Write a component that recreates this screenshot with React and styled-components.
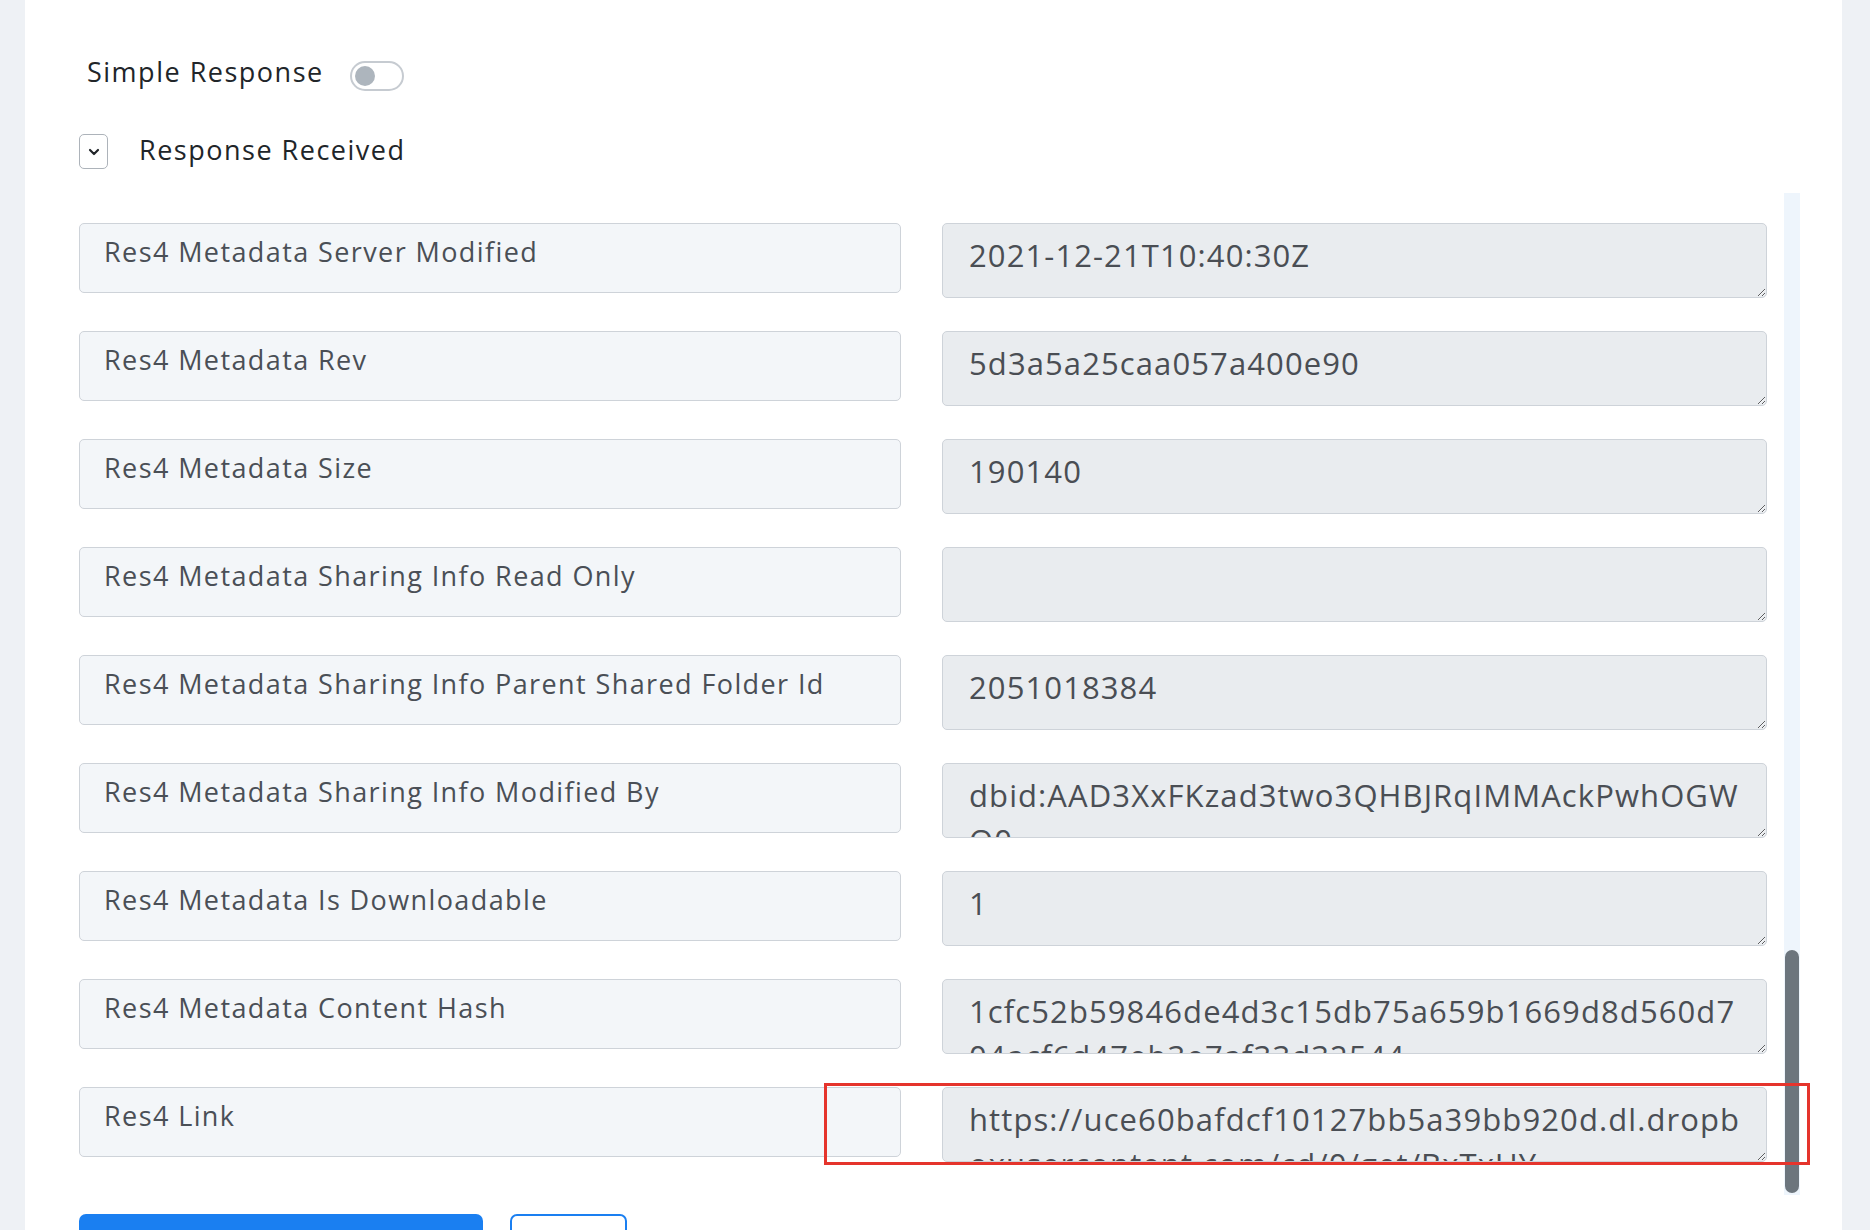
import React from 'react';
import styled, { createGlobalStyle } from 'styled-components';
import { ChevronDown } from 'lucide-react';

const fields = [
    { label: 'Res4 Metadata Server Modified', value: '2021-12-21T10:40:30Z' },
    { label: 'Res4 Metadata Rev', value: '5d3a5a25caa057a400e90' },
    { label: 'Res4 Metadata Size', value: '190140' },
    { label: 'Res4 Metadata Sharing Info Read Only', value: '' },
    { label: 'Res4 Metadata Sharing Info Parent Shared Folder Id', value: '2051018384' },
    { label: 'Res4 Metadata Sharing Info Modified By', value: 'dbid:AAD3XxFKzad3two3QHBJRqIMMAckPwhOGWQ0' },
    { label: 'Res4 Metadata Is Downloadable', value: '1' },
    { label: 'Res4 Metadata Content Hash', value: '1cfc52b59846de4d3c15db75a659b1669d8d560d704acf6d47eb3e7af33d32544' },
    {
        label: 'Res4 Link',
        value: 'https://uce60bafdcf10127bb5a39bb920d.dl.dropboxusercontent.com/cd/0/get/BxTxUY-1x4Z_DA20kq/file',
        marked: true,
    },
];

const App = () => {
    return (
        <>
            <GlobalStyle />
            <Page>
                <Card>
                    <ToggleRow>
                        <Heading $lift={10}>Simple Response</Heading>
                        <Switch>
                            <Knob />
                        </Switch>
                    </ToggleRow>
                    <CollapseRow>
                        <CollapseButton>
                            <ChevronDown size={16} strokeWidth={3.2} />
                        </CollapseButton>
                        <Heading $lift={4}>Response Received</Heading>
                    </CollapseRow>
                    <ScrollArea>
                        <List>
                            {fields.map((f) => (
                                <Row key={f.label}>
                                    <FieldLabel>{f.label}</FieldLabel>
                                    <FieldValue readOnly rows={1} value={f.value} />
                                    {f.marked && <Marker />}
                                </Row>
                            ))}
                        </List>
                        <Track>
                            <Thumb />
                        </Track>
                    </ScrollArea>
                    <Actions>
                        <PrimaryButton />
                        <OutlineButton />
                    </Actions>
                </Card>
            </Page>
        </>
    );
};

const GlobalStyle = createGlobalStyle`
    html, body {
        margin: 0;
        height: 1230px;
        overflow: hidden;
        background: #eef1f5;
    }
    * {
        box-sizing: border-box;
    }
`;
const Page = styled.div`
    display: flex;
    height: 1230px;
    padding: 0 28px 0 25px;
    font-family: "Open Sans", "Noto Sans", sans-serif;
`;
const Card = styled.div`
    flex: 1;
    background: #fff;
    padding: 61px 42px 0 54px;
    display: flex;
    flex-direction: column;
`;
const ToggleRow = styled.div`
    display: flex;
    align-items: center;
    gap: 26px;
    padding-left: 8px;
    height: 30px;
`;
const Heading = styled.span`
    font-size: 27px;
    color: #212529;
    letter-spacing: 1.5px;
    margin-bottom: ${(p) => p.$lift || 0}px;
`;
const Switch = styled.div`
    width: 54px;
    height: 30px;
    border: 2px solid #c6cbd1;
    border-radius: 15px;
    display: flex;
    align-items: center;
    padding-left: 3px;
`;
const Knob = styled.div`
    width: 20px;
    height: 20px;
    border-radius: 50%;
    background: #adb5bd;
`;
const CollapseRow = styled.div`
    display: flex;
    align-items: center;
    gap: 31px;
    margin-top: 43px;
    height: 35px;
`;
const CollapseButton = styled.div`
    width: 29px;
    height: 35px;
    border: 1.5px solid #adb3ba;
    border-radius: 5px;
    display: flex;
    align-items: center;
    justify-content: center;
    color: #212529;
`;
const ScrollArea = styled.div`
    margin-top: 24px;
    height: 1002px;
    display: grid;
    grid-template-columns: 1fr 16px;
    gap: 17px;
`;
const List = styled.div`
    padding-top: 30px;
`;
const Row = styled.div`
    position: relative;
    display: grid;
    grid-template-columns: 822px 825px;
    gap: 41px;
    align-items: start;
    margin-bottom: 33px;
`;
const FieldLabel = styled.div`
    height: 70px;
    padding: 8px 24px 0;
    border: 1.5px solid #ced3d9;
    border-radius: 5px;
    background: #f3f6f9;
    color: #4a4f56;
    font-size: 27px;
    letter-spacing: 1.4px;
    line-height: 1.5;
    white-space: nowrap;
    overflow: hidden;
`;
const FieldValue = styled.textarea`
    display: block;
    width: 825px;
    height: 75px;
    padding: 9px 24px 0 26px;
    border: 1.5px solid #ced3d9;
    border-radius: 5px;
    background: #e9ecef;
    color: #4a4e54;
    font-family: "Open Sans", "Noto Sans", sans-serif;
    font-size: 31px;
    letter-spacing: 1.1px;
    line-height: 45px;
    overflow: hidden;
    resize: vertical;
    outline: none;
`;
const Marker = styled.div`
    position: absolute;
    left: 745px;
    top: -4px;
    width: 986px;
    height: 82px;
    border: 3px solid #e5342c;
    pointer-events: none;
`;
const Track = styled.div`
    background: #eef5fc;
    display: flex;
    flex-direction: column;
    justify-content: flex-end;
    align-items: center;
    padding-bottom: 2px;
`;
const Thumb = styled.div`
    width: 14px;
    height: 243px;
    border-radius: 7px;
    background: #6c757d;
`;
const Actions = styled.div`
    display: flex;
    gap: 27px;
    margin-top: 19px;
`;
const PrimaryButton = styled.button`
    width: 404px;
    height: 54px;
    border: none;
    border-radius: 7px;
    background: #1a7ff1;
`;
const OutlineButton = styled.button`
    width: 117px;
    height: 54px;
    border: 2px solid #1a7ff1;
    border-radius: 7px;
    background: #fff;
`;

export default App;
